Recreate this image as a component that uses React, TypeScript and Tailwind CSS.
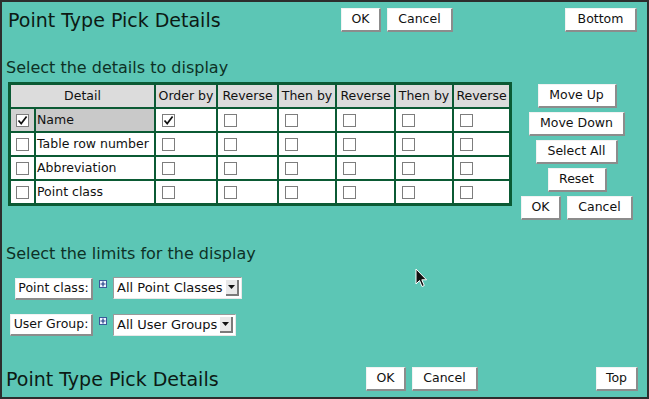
import React from "react"

const cols = [
  { label: "Order by" },
  { label: "Reverse" },
  { label: "Then by" },
  { label: "Reverse" },
  { label: "Then by" },
  { label: "Reverse" },
]

const rows = [
  { name: "Name", checked: true, order: true },
  { name: "Table row number", checked: false, order: false },
  { name: "Abbreviation", checked: false, order: false },
  { name: "Point class", checked: false, order: false },
]

function Check({ on }: { on?: boolean }) {
  return (
    <span className="flex h-[13px] w-[13px] items-center justify-center border border-[#7d7d7d] bg-white">
      {on && (
        <svg width="11" height="11" viewBox="0 0 11 11">
          <path d="M1.5 5.5 L4.2 8.6 L9.6 1.6" fill="none" stroke="#111" strokeWidth="1.7" />
        </svg>
      )}
    </span>
  )
}

function Btn({ children, w }: { children: React.ReactNode; w: string }) {
  return (
    <button
      className={`${w} flex h-[24px] shrink-0 items-center justify-center border-t border-l border-t-[#f2f2f2] border-l-[#f2f2f2] border-r-2 border-b-2 border-r-[#8c8c8c] border-b-[#8c8c8c] bg-white text-[12.5px] text-[#111]`}
    >
      {children}
    </button>
  )
}

function Plus() {
  return (
    <span className="mt-[3px] flex h-[8px] w-[8px] shrink-0 items-center justify-center border border-[#3a5a9a] bg-[#eef3ff]">
      <svg width="6" height="6" viewBox="0 0 6 6">
        <path d="M3 0.5 V5.5 M0.5 3 H5.5" stroke="#243f86" strokeWidth="1.2" />
      </svg>
    </span>
  )
}

function Dropdown({ text, w }: { text: string; w: string }) {
  return (
    <div
      className={`${w} flex h-[22px] items-center justify-between border border-t-[#9a9a9a] border-l-[#9a9a9a] border-r-[#e8e8e8] border-b-[#e8e8e8] bg-white pl-[3px] pr-[2px] text-[13px] text-[#111]`}
    >
      <span>{text}</span>
      <span className="flex h-[16px] w-[13px] items-center justify-center border-r-2 border-b-2 border-r-[#7a7a7a] border-b-[#7a7a7a] bg-[#e9e9e9]">
        <svg width="7" height="4" viewBox="0 0 7 4">
          <path d="M0 0 H7 L3.5 4 Z" fill="#111" />
        </svg>
      </span>
    </div>
  )
}

export default function App() {
  return (
    <div className="relative flex h-[399px] w-[649px] flex-col border-2 border-[#2d2d2d] bg-[#5cc6b5] font-['DejaVu_Sans',sans-serif] text-[#111]">
      {/* header */}
      <div className="mt-[6px] flex h-[24px] items-center pl-[6px] pr-[10px]">
        <div className="w-[333px] shrink-0 text-[19px] leading-[24px] text-[#0c1a14]">Point Type Pick Details</div>
        <Btn w="w-[40px]">OK</Btn>
        <div className="ml-[6px]">
          <Btn w="w-[66px]">Cancel</Btn>
        </div>
        <div className="ml-auto">
          <Btn w="w-[72px]">Bottom</Btn>
        </div>
      </div>

      <div className="mt-[26px] pl-[4px] text-[16px] leading-[20px] text-[#0d3126]">Select the details to display</div>

      <div className="mt-[4px] flex items-start pl-[6px]">
        <div className="grid grid-cols-[23px_118px_60px_59px_56px_57px_56px_55px] grid-rows-[22px_22px_22px_22px_22px] gap-[2px] border-[3px] border-[#0b5a34] bg-[#0b5a34] text-[12.5px]">
          <div className="col-span-2 flex items-center justify-center bg-[#dcdcdc]">Detail</div>
          {cols.map((c, i) => (
            <div key={i} className="flex items-center justify-center whitespace-nowrap bg-[#dcdcdc]">
              {c.label}
            </div>
          ))}
          {rows.map((r, ri) => (
            <React.Fragment key={ri}>
              <div className={`flex items-center justify-center ${ri === 0 ? "bg-[#d2d2d2]" : "bg-white"}`}>
                <Check on={r.checked} />
              </div>
              <div className={`flex items-center pl-[1px] ${ri === 0 ? "bg-[#c9c9c9]" : "bg-white"}`}>{r.name}</div>
              {cols.map((_, ci) => (
                <div key={ci} className="flex items-center bg-white pl-[6px]">
                  <Check on={ci === 0 && r.order} />
                </div>
              ))}
            </React.Fragment>
          ))}
        </div>

        <div className="ml-[9px] mt-[2px] flex w-[112px] flex-col items-center gap-[4px]">
          <Btn w="w-[79px]">Move Up</Btn>
          <Btn w="w-[96px]">Move Down</Btn>
          <Btn w="w-[82px]">Select All</Btn>
          <Btn w="w-[59px]">Reset</Btn>
          <div className="flex gap-[6px]">
            <Btn w="w-[40px]">OK</Btn>
            <Btn w="w-[66px]">Cancel</Btn>
          </div>
        </div>
      </div>

      <div className="mt-[24px] pl-[4px] text-[16px] leading-[20px] text-[#0d3126]">Select the limits for the display</div>

      <div className="mt-[13px] flex items-start">
        <div className="flex w-[91px] justify-end pt-[1px]">
          <button className="flex h-[22px] w-[78px] items-center justify-center border-t border-l border-t-[#f2f2f2] border-l-[#f2f2f2] border-r-2 border-b-2 border-r-[#8c8c8c] border-b-[#8c8c8c] bg-white text-[12.5px]">
            Point class:
          </button>
        </div>
        <div className="ml-[6px]">
          <Plus />
        </div>
        <div className="ml-[6px]">
          <Dropdown text="All Point Classes" w="w-[129px]" />
        </div>
      </div>

      <div className="mt-[14px] flex items-start">
        <div className="flex w-[91px] justify-end">
          <button className="flex h-[22px] w-[83px] items-center justify-center border-t border-l border-t-[#f2f2f2] border-l-[#f2f2f2] border-r-2 border-b-2 border-r-[#8c8c8c] border-b-[#8c8c8c] bg-white text-[12.5px]">
            User Group:
          </button>
        </div>
        <div className="ml-[6px]">
          <Plus />
        </div>
        <div className="ml-[6px]">
          <Dropdown text="All User Groups" w="w-[123px]" />
        </div>
      </div>

      {/* footer */}
      <div className="mb-[6px] mt-auto flex h-[24px] items-center pl-[4px] pr-[9px]">
        <div className="w-[360px] shrink-0 text-[19px] leading-[24px] text-[#0c1a14]">Point Type Pick Details</div>
        <Btn w="w-[40px]">OK</Btn>
        <div className="ml-[6px]">
          <Btn w="w-[66px]">Cancel</Btn>
        </div>
        <div className="ml-auto">
          <Btn w="w-[42px]">Top</Btn>
        </div>
      </div>

      {/* mouse pointer */}
      <svg className="absolute left-[413px] top-[266px]" width="13" height="20" viewBox="0 0 13 20">
        <path d="M1 1 V16 L4.5 12.5 L7 18.5 L9.3 17.5 L6.8 11.8 L11.5 11.8 Z" fill="#111" stroke="#fff" strokeWidth="1" />
      </svg>
    </div>
  )
}
